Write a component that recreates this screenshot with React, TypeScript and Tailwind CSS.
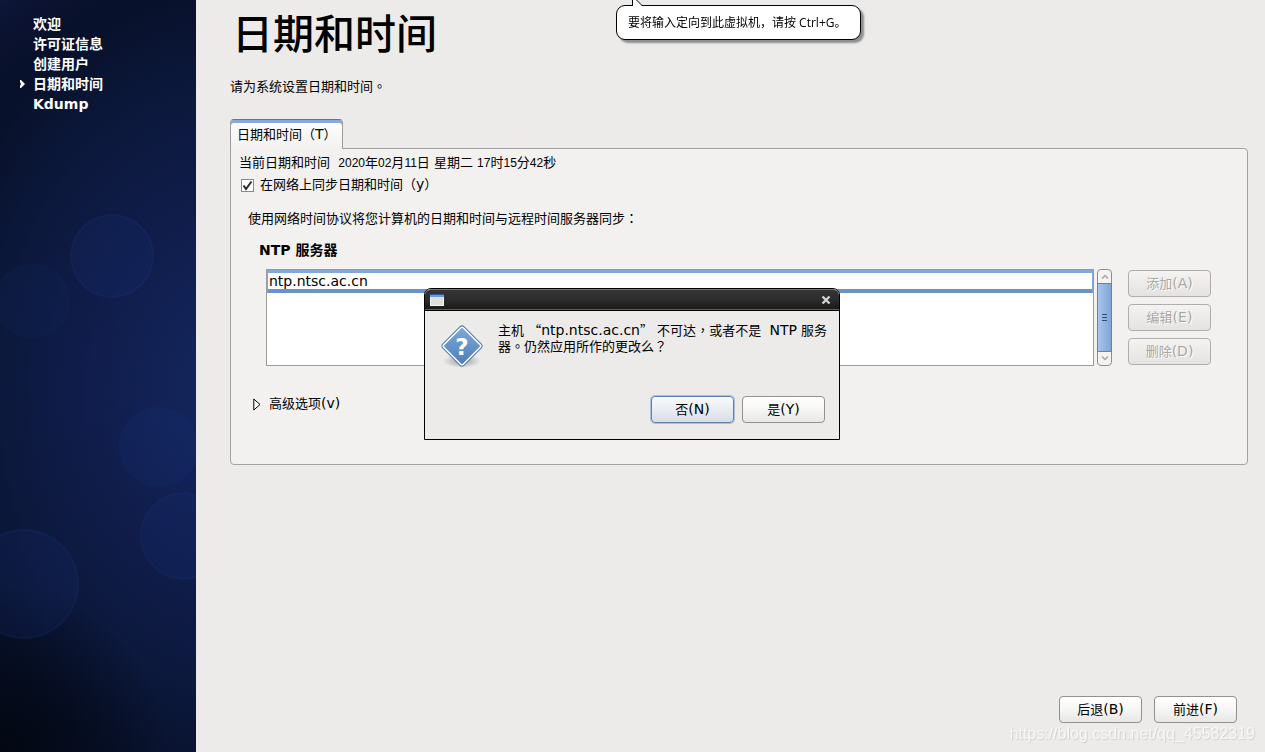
import { useState, type ButtonHTMLAttributes, type ReactNode } from 'react'
import { clsx } from 'clsx'

const STEPS = ['欢迎', '许可证信息', '创建用户', '日期和时间', 'Kdump']
const CURRENT_STEP = 3

// Latin runs are set slightly larger than the Chinese text around them
function Latin({ children }: { children: ReactNode }) {
  return <span className="font-['DejaVu_Sans',sans-serif] text-[14px] leading-none">{children}</span>
}

// Punctuation centred in its full-width cell
function Punct({ children }: { children: ReactNode }) {
  return <span className="font-['Noto_Sans_CJK_TC',sans-serif] leading-none">{children}</span>
}

function Digits({ children }: { children: ReactNode }) {
  return <span className="font-['Liberation_Sans',sans-serif] text-[12px] leading-none">{children}</span>
}

interface GtkButtonProps extends ButtonHTMLAttributes<HTMLButtonElement> {
  label: string
  hotkey: string
  focused?: boolean
}

function GtkButton({ label, hotkey, focused, disabled, ...rest }: GtkButtonProps) {
  return (
    <button
      type="button"
      disabled={disabled}
      className={clsx(
        'flex h-[27px] w-[83px] shrink-0 items-center justify-center rounded-[4px] border text-[13px] leading-4',
        disabled && 'border-[#b0aead] bg-linear-to-b from-[#f4f3f2] to-[#e4e3e1] text-[#a9a7a5] [text-shadow:1px_1px_0_#ffffff]',
        !disabled && focused && 'border-[#5c80b0] bg-linear-to-b from-[#f7f9fc] via-[#e9edf3] to-[#d8dde5] text-black shadow-[0_0_0_1px_#a9c1e0]',
        !disabled && !focused && 'border-[#929190] bg-linear-to-b from-white via-[#f6f6f5] to-[#e8e7e6] text-black',
      )}
      {...rest}
    >
      <span>
        {label}
        <Latin>({hotkey})</Latin>
      </span>
    </button>
  )
}

function Sidebar() {
  return (
    <aside className="relative w-[196px] shrink-0 overflow-hidden bg-[#0b1539]">
      <svg className="absolute inset-0 h-full w-full" viewBox="0 0 196 752" preserveAspectRatio="xMidYMid slice" aria-hidden="true">
        <defs>
          <radialGradient id="glow" gradientUnits="userSpaceOnUse" cx="0" cy="0" r="1" gradientTransform="translate(225 390) scale(300 400)">
            <stop offset="0" stopColor="#14275f" />
            <stop offset="0.45" stopColor="#101d4b" />
            <stop offset="0.8" stopColor="#0b1739" />
            <stop offset="1" stopColor="#08112b" />
          </radialGradient>
          <linearGradient id="topShade" x1="0" y1="0" x2="0.2" y2="1">
            <stop offset="0" stopColor="#10173d" stopOpacity="0.8" />
            <stop offset="0.12" stopColor="#0a1030" stopOpacity="0" />
          </linearGradient>
          <radialGradient id="corner" gradientUnits="userSpaceOnUse" cx="0" cy="752" r="170">
            <stop offset="0" stopColor="#02060f" stopOpacity="0.9" />
            <stop offset="1" stopColor="#02060f" stopOpacity="0" />
          </radialGradient>
        </defs>
        <rect width="196" height="752" fill="url(#glow)" />
        <rect width="196" height="752" fill="url(#topShade)" />
        <rect width="196" height="752" fill="url(#corner)" />
        <g fill="#1d3c8c" fillOpacity="0.14" stroke="#2850a0" strokeOpacity="0.12" strokeWidth="2">
          <circle cx="112" cy="256" r="41" />
          <circle cx="32" cy="301" r="37" fillOpacity="0.08" strokeOpacity="0.06" />
          <circle cx="77" cy="377" r="52" fillOpacity="0.04" strokeOpacity="0.02" />
          <circle cx="159" cy="447" r="40" strokeOpacity="0.04" />
          <circle cx="184" cy="536" r="43" />
          <circle cx="24" cy="584" r="54" />
        </g>
      </svg>
      <ol className="relative pt-[14px] pl-[20px] text-[14px] leading-5 font-bold text-white">
        {STEPS.map((step, i) => (
          <li key={step} className="flex items-center" aria-current={i === CURRENT_STEP ? 'step' : undefined}>
            <span className="w-[13px]">
              {i === CURRENT_STEP && (
                <svg width="5" height="8" viewBox="0 0 5 8" fill="white" aria-hidden="true">
                  <path d="M0 0h1l4 4-4 4H0V6l1-2-1-2z" />
                </svg>
              )}
            </span>
            {step}
          </li>
        ))}
      </ol>
    </aside>
  )
}

function VmTooltip() {
  return (
    <div className="fixed top-[5px] left-[616px] z-20 rounded-[9px] border border-black bg-white py-2 pr-[14px] pl-[11px] font-['Open_Sans','Noto_Sans_CJK_SC',sans-serif] text-[12px] leading-[17px] whitespace-nowrap text-black shadow-[3px_3px_2px_#8f8f8f]">
      <svg className="absolute -top-[6px] left-[15px]" width="12" height="7" viewBox="0 0 12 7" aria-hidden="true">
        <path d="M.5 0v7h10.5L5 0z" fill="white" />
        <path d="M.5 0v6M4.500 0 10.500 6" fill="none" stroke="black" />
      </svg>
      要将输入定向到此虚拟机，请按 Ctrl+G。
    </div>
  )
}

function ListScrollbar() {
  return (
    <div className="flex w-[15px] flex-col rounded-[4px] border border-[#8f8e8d] bg-[#f4f3f2]" aria-hidden="true">
      <span className="flex h-[13px] items-center justify-center">
        <svg width="8" height="5" viewBox="0 0 8 5" fill="none" stroke="#a8a7a5" strokeWidth="1.500"><path d="M1 4.500 4 1.500 7 4.500" /></svg>
      </span>
      <span className="-mx-px flex flex-1 flex-col items-center justify-center gap-[2px] border border-[#5f83b5] bg-linear-to-r from-[#a9c5ea] to-[#7fa5d8]">
        <span className="h-px w-[5px] bg-[#2d4b78]" />
        <span className="h-px w-[5px] bg-[#2d4b78]" />
        <span className="h-px w-[5px] bg-[#2d4b78]" />
      </span>
      <span className="flex h-[13px] items-center justify-center">
        <svg width="8" height="5" viewBox="0 0 8 5" fill="none" stroke="#a8a7a5" strokeWidth="1.500"><path d="M1 .5 4 3.500 7 .5" /></svg>
      </span>
    </div>
  )
}

function ConfirmDialog() {
  return (
    <div
      role="alertdialog"
      aria-describedby="confirm-text"
      className="fixed top-[288px] left-[424px] z-10 w-[416px] rounded-t-[7px] border border-black bg-[#edebea]"
    >
      <div className="flex h-[22px] items-center justify-between rounded-t-[6px] border-t border-b border-t-[#777777] border-b-black bg-linear-to-b from-[#353535] via-[#2c2c2c] to-[#171717] px-[5px] shadow-[inset_0_-1px_0_#4a5f80]">
        <svg width="14" height="12" viewBox="0 0 14 12" aria-hidden="true">
          <rect x=".5" y=".5" width="13" height="11" fill="#dddfda" stroke="#f4f4f2" />
          <path d="M0 0h14v3H0z" fill="#6f9ad0" />
          <path d="M0 0h14v1H0z" fill="#2c5ca6" />
        </svg>
        <button type="button" aria-label="关闭" className="flex h-4 w-4 items-center justify-center">
          <svg width="10" height="10" viewBox="0 0 10 10" stroke="#d3d3d3" strokeWidth="2.400" aria-hidden="true">
            <path d="M1.500 1.500l7 7M8.500 1.500l-7 7" />
          </svg>
        </button>
      </div>
      <div className="flex gap-[15px] pt-3 pl-4">
        <svg width="42" height="46" viewBox="0 0 42 46" className="shrink-0" aria-hidden="true">
          <defs>
            <linearGradient id="diamond" x1="0" y1="0" x2="1" y2="1">
              <stop offset="0" stopColor="#7fa8d8" />
              <stop offset="1" stopColor="#4d7ebb" />
            </linearGradient>
            <radialGradient id="iconShadow">
              <stop offset="0" stopColor="#000000" stopOpacity="0.35" />
              <stop offset="1" stopColor="#000000" stopOpacity="0" />
            </radialGradient>
          </defs>
          <ellipse cx="21" cy="38" rx="19" ry="7" fill="url(#iconShadow)" />
          <rect x="6" y="8" width="30" height="30" rx="3" transform="rotate(45 21 23)" fill="white" stroke="#4a78b3" />
          <rect x="8" y="10" width="26" height="26" rx="1" transform="rotate(45 21 23)" fill="url(#diamond)" />
          <text x="21" y="32" textAnchor="middle" fill="white" fontFamily="DejaVu Sans" fontWeight="bold" fontSize="23">?</text>
        </svg>
        <p id="confirm-text" className="text-[13px] leading-4 whitespace-pre">
          主机 <Punct>“</Punct><Latin>ntp.ntsc.ac.cn</Latin><Punct>”</Punct> 不可达<Punct>，</Punct>或者不是{'  '}<Latin>NTP</Latin> 服务<br />
          器<Punct>。</Punct>仍然应用所作的更改么<Punct>？</Punct>
        </p>
      </div>
      <div className="flex justify-end gap-2 pt-[27px] pr-[14px] pb-4">
        <GtkButton label="否" hotkey="N" focused />
        <GtkButton label="是" hotkey="Y" />
      </div>
    </div>
  )
}

export default function App() {
  const [syncNetwork, setSyncNetwork] = useState(true)
  const [server, setServer] = useState('ntp.ntsc.ac.cn')

  return (
    <div className="flex min-h-screen bg-[#edebea] font-['DejaVu_Sans','Noto_Sans_CJK_SC',sans-serif] text-[13px] text-black">
      <Sidebar />

      <main className="flex min-w-0 flex-1 flex-col pr-[17px] pl-[34px]">
        <h1 className="pt-[5px] pl-[2px] text-[41px] leading-[60px] font-medium">日期和时间</h1>
        <p className="h-8 pt-3 leading-5">请为系统设置日期和时间<Punct>。</Punct></p>

        {/* Tab */}
        <div role="tablist" className="mt-[22px] flex">
          <button
            type="button"
            role="tab"
            aria-selected="true"
            className="relative -mb-px h-[30px] w-[113px] rounded-t-[4px] border border-b-0 border-[#9c9b99] border-t-[#5379ad] bg-linear-to-b from-white to-[#f2f1f0] pl-[6px] text-left whitespace-nowrap shadow-[inset_0_3px_0_#86aadb]"
          >
            日期和时间（<Latin>T</Latin>）
          </button>
        </div>

        <section className="rounded-[4px] rounded-tl-none border border-[#a3a2a0] bg-[#f2f1f0] pt-[3px] pr-9 pb-[49px] pl-2 leading-[22px]">
          <p className="h-[22px] whitespace-pre">
            当前日期和时间{'  '}<Digits>2020</Digits>年<Digits>02</Digits>月<Digits>11</Digits>日 星期二 <Digits>17</Digits>时<Digits>15</Digits>分<Digits>42</Digits>秒
          </p>
          <label className="flex h-[22px] items-center gap-[6px]">
            <span className="relative ml-[2px] flex">
              <input
                type="checkbox"
                checked={syncNetwork}
                onChange={(e) => setSyncNetwork(e.target.checked)}
                className="h-[13px] w-[13px] appearance-none border border-[#8a8988] bg-white"
              />
              {syncNetwork && (
                <svg className="pointer-events-none absolute inset-0" width="13" height="13" viewBox="0 0 13 13" aria-hidden="true">
                  <path d="M2.500 6.500 5 10 10.500 2.500" fill="none" stroke="#2a2a2a" strokeWidth="2" />
                </svg>
              )}
            </span>
            <span>在网络上同步日期和时间（<Latin>y</Latin>）</span>
          </label>

          <p className="mt-3 h-[22px] pl-[9px]">使用网络时间协议将您计算机的日期和时间与远程时间服务器同步<Punct>：</Punct></p>
          <h2 className="mt-[9px] h-[22px] pl-5 text-[14px] font-bold">NTP 服务器</h2>

          <div className="mt-2 flex pl-[27px]">
            <div className="h-[97px] min-w-0 flex-1 border border-[#9c9b99] bg-white">
              <div className="border-t-[3px] border-r border-b-4 border-l border-t-[#82a8da] border-r-[#82a8da] border-b-[#6a93c9] border-l-[#82a8da]">
                <input
                  type="text"
                  aria-label="NTP 服务器"
                  value={server}
                  onChange={(e) => setServer(e.target.value)}
                  className="block h-4 w-full bg-white px-px text-[14px] leading-4 outline-none"
                />
              </div>
            </div>
            <div className="ml-[3px] flex">
              <ListScrollbar />
            </div>
            <div className="ml-4 flex flex-col gap-[7px] pt-px">
              <GtkButton label="添加" hotkey="A" disabled />
              <GtkButton label="编辑" hotkey="E" disabled />
              <GtkButton label="删除" hotkey="D" disabled />
            </div>
          </div>

          <button type="button" aria-expanded="false" className="mt-[27px] ml-[14px] flex h-[22px] items-center gap-2">
            <svg width="8" height="13" viewBox="0 0 8 13" aria-hidden="true">
              <path d="M.8 1v11L7 6.500z" fill="white" stroke="black" />
            </svg>
            <span>高级选项<Latin>(v)</Latin></span>
          </button>
        </section>

        <div className="mt-auto flex justify-end gap-3 pt-6 pr-[11px] pb-[29px]">
          <GtkButton label="后退" hotkey="B" />
          <GtkButton label="前进" hotkey="F" />
        </div>
      </main>

      <ConfirmDialog />
      <VmTooltip />
      <span className="pointer-events-none fixed right-[10px] bottom-[9px] font-['Liberation_Sans',sans-serif] text-[16px] leading-[18px] text-[#f7f7f6] [text-shadow:1px_1px_1px_#d0cfce]">
        https://blog.csdn.net/qq_45582319
      </span>
    </div>
  )
}
